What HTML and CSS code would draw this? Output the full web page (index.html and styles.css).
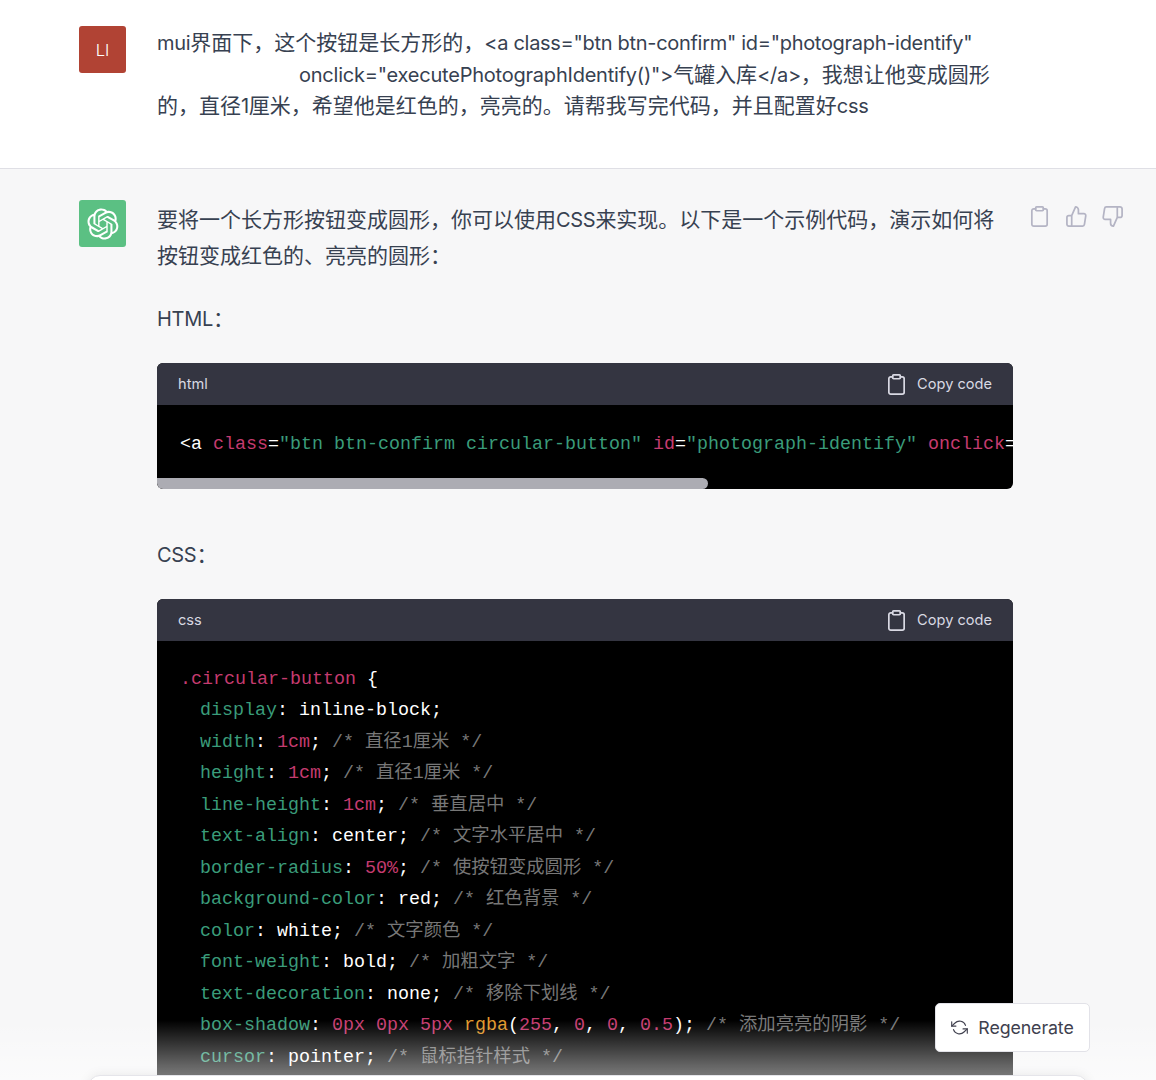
FILE: index.html
```html
<!DOCTYPE html>
<html lang="zh">
<head>
<meta charset="utf-8">
<title>Chat</title>
<link rel="stylesheet" href="styles.css">
</head>
<body>
<main class="page">
  <section class="turn turn-user">
    <div class="avatar avatar-user">LI</div>
    <div class="content user-text"><span class="lat">mui</span>界面下，这个按钮是长方形的，<span class="lat">&lt;a class="btn btn-confirm" id="photograph-identify"</span><br><span class="indent"></span><span class="lat lat-wide">onclick="executePhotographIdentify()"&gt;</span>气罐入库<span class="lat">&lt;/a&gt;</span>，我想让他变成圆形的，直径<span class="lat">1</span>厘米，希望他是红色的，亮亮的。请帮我写完代码，并且配置好<span class="lat">css</span></div>
  </section>
  <section class="turn turn-bot">
    <div class="avatar avatar-bot">
      <svg class="logo" viewBox="0 0 41 41"><path fill="currentColor" d="M37.5324 16.8707C37.9808 15.5241 38.1363 14.0974 37.9886 12.6859C37.8409 11.2744 37.3934 9.91076 36.676 8.68622C35.6126 6.83404 33.9882 5.3676 32.0373 4.4985C30.0864 3.62941 27.9098 3.40259 25.8215 3.85078C24.8796 2.7893 23.7219 1.94125 22.4257 1.36341C21.1295 0.785575 19.7249 0.491269 18.3058 0.500197C16.1708 0.495044 14.0893 1.16803 12.3614 2.42214C10.6335 3.67624 9.34853 5.44666 8.6917 7.47815C7.30085 7.76286 5.98686 8.3414 4.8377 9.17505C3.68854 10.0087 2.73073 11.0782 2.02839 12.312C0.956464 14.1591 0.498905 16.2988 0.721698 18.4228C0.944492 20.5467 1.83612 22.5449 3.268 24.1293C2.81966 25.4759 2.66413 26.9026 2.81182 28.3141C2.95951 29.7256 3.40701 31.0892 4.12437 32.3138C5.18791 34.1659 6.8123 35.6322 8.76321 36.5013C10.7141 37.3704 12.8907 37.5973 14.9789 37.1492C15.9208 38.2107 17.0786 39.0587 18.3747 39.6366C19.6709 40.2144 21.0755 40.5087 22.4946 40.4998C24.6307 40.5054 26.7133 39.8321 28.4418 38.5772C30.1704 37.3223 31.4556 35.5506 32.1119 33.5179C33.5027 33.2332 34.8167 32.6547 35.9659 31.821C37.115 30.9874 38.0728 29.9178 38.7752 28.684C39.8458 26.8371 40.3023 24.6979 40.0789 22.5748C39.8556 20.4517 38.9639 18.4544 37.5324 16.8707ZM22.4978 37.8849C20.7443 37.8874 19.0459 37.2733 17.6994 36.1501C17.7601 36.117 17.8666 36.0586 17.936 36.0161L25.9004 31.4156C26.1003 31.3019 26.2663 31.137 26.3813 30.9378C26.4964 30.7386 26.5563 30.5124 26.5549 30.2825V19.0542L29.9213 20.998C29.9389 21.0068 29.9541 21.0198 29.9656 21.0359C29.977 21.052 29.9842 21.0707 29.9867 21.0902V30.3889C29.9842 32.375 29.1946 34.2791 27.7909 35.6841C26.3872 37.0892 24.4838 37.8806 22.4978 37.8849ZM6.39227 31.0064C5.51397 29.4888 5.19742 27.7107 5.49804 25.9832C5.55718 26.0187 5.66048 26.0818 5.73461 26.1244L13.699 30.7248C13.8975 30.8408 14.1233 30.902 14.3532 30.902C14.583 30.902 14.8088 30.8408 15.0073 30.7248L24.731 25.1103V28.9979C24.7321 29.0177 24.7283 29.0376 24.7199 29.0556C24.7115 29.0736 24.6988 29.0893 24.6829 29.1012L16.6317 33.7497C14.9096 34.7416 12.8643 35.0097 10.9447 34.4954C9.02506 33.9811 7.38785 32.7263 6.39227 31.0064ZM4.29707 13.6194C5.17156 12.0998 6.55279 10.9364 8.19885 10.3327C8.19885 10.4013 8.19491 10.5228 8.19491 10.6071V19.808C8.19351 20.0378 8.25334 20.2638 8.36823 20.4629C8.48312 20.6619 8.64893 20.8267 8.84863 20.9404L18.5723 26.5542L15.206 28.4979C15.1894 28.5089 15.1703 28.5155 15.1505 28.5173C15.1307 28.5191 15.1107 28.516 15.0924 28.5082L7.04046 23.8557C5.32135 22.8601 4.06716 21.2235 3.55289 19.3046C3.03862 17.3858 3.30624 15.3413 4.29707 13.6194ZM31.955 20.0556L22.2312 14.4411L25.5976 12.4981C25.6142 12.4872 25.6333 12.4805 25.6531 12.4787C25.6729 12.4769 25.6928 12.4801 25.7111 12.4879L33.7631 17.1364C34.9967 17.849 36.0017 18.8982 36.6606 20.1613C37.3194 21.4244 37.6047 22.849 37.4832 24.2684C37.3617 25.6878 36.8382 27.0432 35.9743 28.1759C35.1103 29.3086 33.9415 30.1717 32.6047 30.6641C32.6047 30.5947 32.6047 30.4733 32.6047 30.3889V21.188C32.6066 20.9586 32.5474 20.7328 32.4332 20.5338C32.319 20.3348 32.154 20.1698 31.955 20.0556ZM35.3055 15.0128C35.2464 14.9765 35.1431 14.9142 35.069 14.8717L27.1045 10.2712C26.906 10.1554 26.6803 10.0943 26.4504 10.0943C26.2206 10.0943 25.9948 10.1554 25.7963 10.2712L16.0726 15.8858V11.9982C16.0715 11.9783 16.0753 11.9585 16.0837 11.9405C16.0921 11.9225 16.1048 11.9068 16.1207 11.8949L24.1719 7.25025C25.4053 6.53903 26.8158 6.19376 28.2383 6.25482C29.6608 6.31589 31.0364 6.78077 32.2044 7.59508C33.3723 8.40939 34.2842 9.53945 34.8334 10.8531C35.3826 12.1667 35.5464 13.6095 35.3055 15.0128ZM14.2424 21.9419L10.8752 19.9981C10.8576 19.9893 10.8423 19.9763 10.8309 19.9602C10.8195 19.9441 10.8122 19.9254 10.8098 19.9058V10.6071C10.8107 9.18295 11.2173 7.78848 11.9819 6.58696C12.7466 5.38544 13.8377 4.42659 15.1275 3.82264C16.4173 3.21869 17.8524 2.99464 19.2649 3.1767C20.6775 3.35876 22.0089 3.93941 23.1034 4.85067C23.0427 4.88379 22.937 4.94215 22.8668 4.98473L14.9024 9.58517C14.7025 9.69878 14.5366 9.86356 14.4215 10.0626C14.3065 10.2616 14.2466 10.4877 14.2479 10.7175L14.2424 21.9419ZM16.071 17.9991L20.4018 15.4978L24.7325 17.9975V22.9985L20.4018 25.4983L16.071 22.9985V17.9991Z"/></svg>
    </div>
    <div class="content bot-text">
      <p class="para para-first">要将一个长方形按钮变成圆形，你可以使用<span class="lat">CSS</span>来实现。以下是一个示例代码，演示如何将按钮变成红色的、亮亮的圆形：</p>
      <p class="para para-label"><span class="lat">HTML</span>：</p>
      <div class="code-block code-block-html">
        <div class="code-head">
          <span>html</span>
          <span class="copy">
            <svg class="icon icon-copy" viewBox="0 0 24 24"><path d="M16 4h2a2 2 0 0 1 2 2v14a2 2 0 0 1-2 2H6a2 2 0 0 1-2-2V6a2 2 0 0 1 2-2h2"/><rect x="8" y="2" width="8" height="4" rx="1"/></svg>
            Copy code
          </span>
        </div>
        <pre class="code code-single">&lt;a <span class="k">class</span>=<span class="s">"btn btn-confirm circular-button"</span> <span class="k">id</span>=<span class="s">"photograph-identify"</span> <span class="k">onclick</span>=<span class="s">"executePhotographIdentify()"</span>&gt;气罐入库&lt;/a&gt;</pre>
        <div class="scroll-track"><div class="scroll-thumb"></div></div>
      </div>
      <p class="para para-label para-css"><span class="lat">CSS</span>：</p>
      <div class="code-block">
        <div class="code-head">
          <span>css</span>
          <span class="copy">
            <svg class="icon icon-copy" viewBox="0 0 24 24"><path d="M16 4h2a2 2 0 0 1 2 2v14a2 2 0 0 1-2 2H6a2 2 0 0 1-2-2V6a2 2 0 0 1 2-2h2"/><rect x="8" y="2" width="8" height="4" rx="1"/></svg>
            Copy code
          </span>
        </div>
<pre class="code"><span class="k">.circular-button</span> {
  <span class="s p">display</span>: inline-block;
  <span class="s p">width</span>: <span class="k">1cm</span>; <span class="c">/* 直径1厘米 */</span>
  <span class="s p">height</span>: <span class="k">1cm</span>; <span class="c">/* 直径1厘米 */</span>
  <span class="s p">line-height</span>: <span class="k">1cm</span>; <span class="c">/* 垂直居中 */</span>
  <span class="s p">text-align</span>: center; <span class="c">/* 文字水平居中 */</span>
  <span class="s p">border-radius</span>: <span class="k">50%</span>; <span class="c">/* 使按钮变成圆形 */</span>
  <span class="s p">background-color</span>: red; <span class="c">/* 红色背景 */</span>
  <span class="s p">color</span>: white; <span class="c">/* 文字颜色 */</span>
  <span class="s p">font-weight</span>: bold; <span class="c">/* 加粗文字 */</span>
  <span class="s p">text-decoration</span>: none; <span class="c">/* 移除下划线 */</span>
  <span class="s p">box-shadow</span>: <span class="k">0px</span> <span class="k">0px</span> <span class="k">5px</span> <span class="f">rgba</span>(<span class="k">255</span>, <span class="k">0</span>, <span class="k">0</span>, <span class="k">0.5</span>); <span class="c">/* 添加亮亮的阴影 */</span>
  <span class="s p">cursor</span>: pointer; <span class="c">/* 鼠标指针样式 */</span>
}</pre>
      </div>
    </div>
    <div class="actions">
      <svg class="icon icon-action" viewBox="0 0 24 24"><path d="M16 4h2a2 2 0 0 1 2 2v14a2 2 0 0 1-2 2H6a2 2 0 0 1-2-2V6a2 2 0 0 1 2-2h2"/><rect x="8" y="2" width="8" height="4" rx="1"/></svg>
      <svg class="icon icon-action" viewBox="0 0 24 24"><path d="M14 9V5a3 3 0 0 0-3-3l-4 9v11h11.28a2 2 0 0 0 2-1.7l1.38-9a2 2 0 0 0-2-2.3zM7 22H4a2 2 0 0 1-2-2v-7a2 2 0 0 1 2-2h3"/></svg>
      <svg class="icon icon-action" viewBox="0 0 24 24"><path d="M10 15v4a3 3 0 0 0 3 3l4-9V2H5.72a2 2 0 0 0-2 1.7l-1.38 9a2 2 0 0 0 2 2.3zm7-13h2.67A2.31 2.31 0 0 1 22 4v7a2.31 2.31 0 0 1-2.33 2H17"/></svg>
    </div>
  </section>
  <div class="fade"></div>
  <div class="composer"></div>
  <button class="regen" type="button">
    <svg class="icon icon-regen" viewBox="0 0 24 24"><polyline points="1 4 1 10 7 10"/><polyline points="23 20 23 14 17 14"/><path d="M20.49 9A9 9 0 0 0 5.64 5.64L1 10m22 4l-4.64 4.36A9 9 0 0 1 3.51 15"/></svg>
    Regenerate
  </button>
</main>
</body>
</html>
```
FILE: styles.css
```css
* { box-sizing: border-box; }
html, body { margin: 0; height: 100%; }
body { font-family: Inter, "Noto Sans CJK SC", sans-serif; color: #374151; background: #f7f7f8; overflow: hidden; }
.page { position: relative; height: 1080px; overflow: hidden; }

.turn { display: flex; padding-left: 79px; }
.turn-user { height: 169px; padding-top: 26px; background: #fff; border-bottom: 1px solid #dfdfe5; }
.turn-bot { padding-top: 31px; background: #f7f7f8; }

.avatar { flex: none; width: 47px; height: 47px; border-radius: 3px; display: flex; align-items: center; justify-content: center; color: #fff; margin-right: 31px; }
.avatar-user { background: #b14334; font-size: 16.5px; font-weight: 300; }
.avatar-bot { background: #5bc083; }
.logo { width: 32px; height: 32px; }

.content { flex: none; width: 856px; font-size: 21px; }
.user-text { line-height: 31.5px; padding-top: 1px; }
.user-text .lat { line-height: 1; }
.bot-text { padding-top: 2px; }
.lat { font-size: 20px; letter-spacing: -0.3px; }
.lat-wide { letter-spacing: -0.22px; }
.indent { display: inline-block; width: 142px; }

.para { margin: 0; line-height: 36px; }
.para-first { margin-bottom: 27px; }
.para-label { margin-bottom: 26px; }
.para-css { margin-top: 48px; }

.code-block { border-radius: 6px; overflow: hidden; background: #000; }
.code-head { height: 42px; background: #343541; color: #d9d9e3; display: flex; justify-content: space-between; align-items: center; padding: 0 21px; font-size: 14.6px; }
.copy { display: flex; align-items: center; gap: 9px; }
.code { margin: 0; padding: 22.5px 23px; font-family: "Liberation Mono", "Noto Sans CJK SC", monospace; font-size: 18.33px; line-height: 31.5px; color: #fff; overflow: hidden; white-space: pre; }
.code-single { height: 73px; padding-top: 23.5px; padding-bottom: 0; }
.scroll-track { height: 11px; }
.scroll-thumb { width: 551px; height: 11px; background: #acacb3; border-radius: 0 6px 6px 6px; }

.k { color: #c53b6f; }
.s { color: #3a9c7a; }
.p { margin-left: -2px; }
.c { color: #777; }
.f { color: #e0982a; }

.actions { display: flex; gap: 13.5px; margin-left: 15px; padding-top: 4.5px; }
.icon { fill: none; stroke: currentColor; stroke-width: 1.8; stroke-linecap: round; stroke-linejoin: round; flex: none; }
.icon-action { width: 23px; height: 23px; color: #b4b4c4; }
.icon-copy { width: 23px; height: 23px; }
.icon-regen { width: 17px; height: 17px; color: #40414f; stroke-width: 1.6; }

.fade { position: absolute; left: 0; right: 0; bottom: 0; height: 60px; background: linear-gradient(rgba(255,255,255,0), rgba(255,255,255,.52)); }
.composer { position: absolute; left: 88px; width: 1000px; bottom: -40px; height: 45px; background: #fff; border: 1px solid #e5e5ea; border-radius: 12px; box-shadow: 0 0 12px rgba(0,0,0,.08); }
.regen { position: absolute; left: 935px; top: 1003px; width: 155px; height: 49px; display: flex; align-items: center; justify-content: center; gap: 10px; background: #fff; border: 1px solid #e2e2e8; border-radius: 5px; color: #40414f; font: 17.8px Inter, sans-serif; letter-spacing: -0.1px; padding: 0; }
```
